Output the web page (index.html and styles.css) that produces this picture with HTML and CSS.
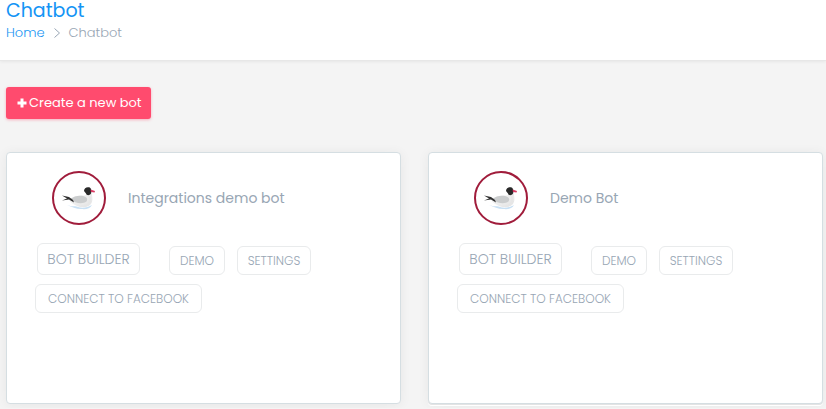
FILE: index.html
```html
<!DOCTYPE html>
<html lang="en">
<head>
<meta charset="utf-8">
<meta name="viewport" content="width=device-width, initial-scale=1">
<title>Chatbot</title>
<link rel="stylesheet" href="styles.css">
</head>
<body>
<svg class="sprite" aria-hidden="true">
  <defs>
    <linearGradient id="breast" x1="0" y1="0" x2="1" y2="1">
      <stop offset="0" stop-color="#f8f8f8"/>
      <stop offset="1" stop-color="#e4e4e4"/>
    </linearGradient>
    <symbol id="gull" viewBox="0 0 54 54">
      <circle cx="27" cy="27" r="26" fill="#fff" stroke="#a01c3b" stroke-width="2"/>
      <path d="M15 34C20 36 23 34.500 28 36.500C32 37 37 36 40 34C38 38 34 38.500 29 38C24 38 20 36 15 34Z" fill="#c8e0f4"/>
      <path d="M17 29C20 26 27 24 32 24.500C36 24 35 21 33.500 19L40 20C39.500 25 41.500 28 39.500 32C37 37 29 37 24 34.500C21 33 18 31 17 29Z" fill="url(#breast)"/>
      <path d="M37.500 24C40 27 40 31 37 34C34 36.500 29 36.500 25 34.500C31 35.500 35 34 36.500 31C37.500 28 36.500 26 37.500 24Z" fill="#e6e6e6"/>
      <path d="M18 28C22 25 27 24 31 25C35 26 36 28 34.500 30.500C31 33 24 33 18 28Z" fill="#cbcdce"/>
      <path d="M10 24.500L17 26L21 29L22 31.500L17 28.500L10 29.500L15 27.500Z" fill="#303030"/>
      <path d="M32 20C32 17 34.500 15.800 37 16.300C39.500 17 39.800 20 39 22.500C37.500 25 34.500 24.500 34 22.500Z" fill="#292929"/>
      <path d="M38.500 18.500L43 20L42.500 21.500L39 21Z" fill="#d83b62"/>
    </symbol>
  </defs>
</svg>
<header class="page-header">
  <h1 class="page-title">Chatbot</h1>
  <nav class="breadcrumb" aria-label="Breadcrumb">
    <a href="#">Home</a>
    <svg class="chevron" viewBox="0 0 8 10" aria-hidden="true"><path d="M1.500 .5l5 4.500-5 4.500"/></svg>
    <span>Chatbot</span>
  </nav>
</header>
<main class="content">
  <button class="create" type="button"><svg class="plus" viewBox="0 0 10 10" aria-hidden="true"><path d="M5 .5v9M.5 5h9"/></svg>Create a new bot</button>
  <div class="cards">
    <article class="card">
      <div class="bot">
        <svg class="avatar" aria-hidden="true"><use href="#gull"/></svg>
        <h2 class="bot-name">Integrations demo bot</h2>
      </div>
      <div class="actions">
        <button class="action builder" type="button">BOT BUILDER</button>
        <button class="action demo" type="button">DEMO</button>
        <button class="action settings" type="button">SETTINGS</button>
      </div>
      <button class="action connect" type="button">CONNECT TO FACEBOOK</button>
    </article>
    <article class="card">
      <div class="bot">
        <svg class="avatar" aria-hidden="true"><use href="#gull"/></svg>
        <h2 class="bot-name">Demo Bot</h2>
      </div>
      <div class="actions">
        <button class="action builder" type="button">BOT BUILDER</button>
        <button class="action demo" type="button">DEMO</button>
        <button class="action settings" type="button">SETTINGS</button>
      </div>
      <button class="action connect" type="button">CONNECT TO FACEBOOK</button>
    </article>
  </div>
</main>
</body>
</html>
```
FILE: styles.css
```css
* {
  box-sizing: border-box;
}

body {
  margin: 0;
  background: #f4f4f4;
  color: #98a6b4;
  font-family: Poppins, Inter, sans-serif;
  font-size: 13px;
  font-weight: 300;
}

button {
  font-family: inherit;
}

.sprite {
  position: absolute;
  width: 0;
  height: 0;
}

.page-header {
  padding: 0 6px 17px;
  background: #fff;
  border-bottom: 1px solid #e7e7e7;
  box-shadow: 0 1px 3px rgba(0, 0, 0, 0.06);
}

.page-title {
  margin: 0;
  color: #1494f5;
  font-size: 19px;
  font-weight: 400;
  line-height: 21px;
}

.breadcrumb {
  display: flex;
  align-items: center;
  gap: 8px;
  padding-top: 1px;
  line-height: 21px;
}

.breadcrumb a {
  color: #2196f3;
  text-decoration: none;
}

.chevron {
  width: 8px;
  height: 10px;
  fill: none;
  stroke: #98a6b4;
}

.content {
  padding: 26px 3px 4px 6px;
}

.create {
  display: flex;
  align-items: center;
  gap: 2px;
  height: 32px;
  padding: 0 9px 0 11px;
  border: 0;
  border-radius: 3px;
  background: #ff4b6e;
  box-shadow: 0 1px 3px rgba(255, 75, 110, 0.4);
  color: #fff;
  font-size: 13px;
  font-weight: 400;
}

.plus {
  width: 10px;
  height: 10px;
  stroke: #fff;
  stroke-width: 3;
}

.cards {
  display: grid;
  grid-template-columns: 1fr 1fr;
  gap: 27px;
  margin-top: 33px;
}

.card {
  min-height: 252px;
  padding: 18px 28px;
  border: 1px solid #d5dee2;
  border-radius: 4px;
  background: #fff;
  box-shadow: 0 1px 12px rgba(0, 0, 0, 0.06);
}

.card + .card {
  box-shadow: 0 1px #e4e4e4, 0 2px #fff, 0 1px 12px rgba(0, 0, 0, 0.06);
}

.bot {
  display: flex;
  align-items: center;
  gap: 22px;
  padding-left: 17px;
}

.avatar {
  width: 54px;
  height: 54px;
}

.bot-name {
  margin: 0;
  font-size: 14px;
  font-weight: 400;
}

.actions {
  display: flex;
  align-items: flex-end;
  margin-top: 18px;
  padding-left: 2px;
}

.action {
  height: 29px;
  padding: 0;
  border: 1px solid #e9ebec;
  border-radius: 6px;
  background: #fff;
  color: #98a6b4;
  font-size: 12px;
  font-weight: 300;
  white-space: nowrap;
}

.builder {
  min-width: 103px;
  height: 32px;
  font-size: 14px;
}

.demo {
  min-width: 56px;
  margin-left: 29px;
}

.settings {
  min-width: 74px;
  margin-left: 12px;
}

.connect {
  min-width: 167px;
  margin-top: 9px;
}
```
